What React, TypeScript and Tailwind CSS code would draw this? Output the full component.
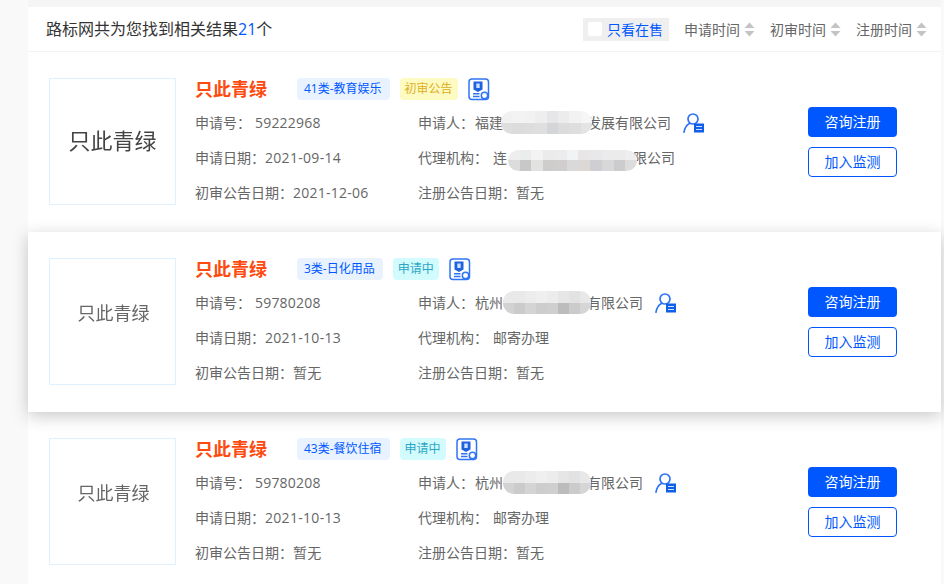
import React from "react";

const sortLabels = ["申请时间", "初审时间", "注册时间"];

const SortIcon = () => (
  <svg width="11" height="15" viewBox="0 0 11 15" className="ml-[4px]">
    <path d="M5.5 0.5 L10.5 6 H0.5 Z" fill="#c4c4c4" />
    <path d="M0.5 9 H10.5 L5.5 14.5 Z" fill="#c4c4c4" />
  </svg>
);

const MarkIcon = () => (
  <svg width="22" height="23" viewBox="0 0 22 23" fill="none" className="ml-[10px]">
    <rect x="1" y="1" width="19.5" height="20.5" rx="3" stroke="#2f74f5" strokeWidth="1.5" />
    <path d="M5.5 3.5 H14.5 V11.5 L10 14 L5.5 11.5 Z" fill="#1f62e0" />
    <rect x="8.3" y="5.5" width="3.4" height="4.5" fill="#cfe0ff" />
    <path d="M5 15.8 H11.5 M5 18.5 H11.5" stroke="#2f74f5" strokeWidth="1.4" />
    <circle cx="16.5" cy="17.5" r="3.2" fill="#fff" stroke="#2f74f5" strokeWidth="1.5" />
  </svg>
);

const PersonIcon = () => (
  <svg width="21" height="20" viewBox="0 0 21 20" fill="none" className="ml-[12px] shrink-0">
    <circle cx="10" cy="6" r="5" stroke="#2f74f5" strokeWidth="1.7" />
    <path d="M1 19.2 C1.8 14.5 3.6 12 6.4 10.5" stroke="#2f74f5" strokeWidth="1.7" strokeLinecap="round" />
    <rect x="11" y="10.5" width="10" height="9" fill="#0f5fe8" />
    <path d="M13 13.5 H19 M13 16.5 H19" stroke="#cfe0ff" strokeWidth="1" />
  </svg>
);

const Mosaic = ({ cells, className }: { cells: string[]; className: string }) => (
  <span className={`relative z-10 inline-grid overflow-hidden rounded-[11px] ${className}`}>
    {cells.map((c, i) => (
      <span key={i} className={c} />
    ))}
  </span>
);

const applicantMosaicA = [
  "bg-[#f1f1f1]", "bg-[#f3f3f3]", "bg-[#f2f2f2]", "bg-[#eeeeee]", "bg-[#e6e6e8]", "bg-[#ececec]", "bg-[#f2f2f2]", "bg-[#f6f6f6]",
  "bg-[#dedede]", "bg-[#dcdcdc]", "bg-[#dedcdc]", "bg-[#dfdfdf]", "bg-[#d4d5d8]", "bg-[#dcdcdc]", "bg-[#dedede]", "bg-[#e4e4e4]",
];
const agentMosaic = [
  "bg-[#eeeeee]", "bg-[#ebecec]", "bg-[#f3f3f3]", "bg-[#ebebeb]", "bg-[#ececec]", "bg-[#f2f3f5]", "bg-[#e8e6e6]", "bg-[#e8e8ea]", "bg-[#ebebeb]", "bg-[#ebebeb]", "bg-[#eeeeee]",
  "bg-[#dcdcdc]", "bg-[#c8c8c8]", "bg-[#e2e2e0]", "bg-[#cfcdcc]", "bg-[#cfcecc]", "bg-[#dad9d9]", "bg-[#dcd8d6]", "bg-[#cfced2]", "bg-[#d8d8d8]", "bg-[#cccbce]", "bg-[#dcdcdc]",
];
const applicantMosaicB = [
  "bg-[#e9e9e9]", "bg-[#e9e9e9]", "bg-[#ececec]", "bg-[#efefef]", "bg-[#ececec]", "bg-[#e6e6e6]", "bg-[#e2e2e2]", "bg-[#e8e8e8]",
  "bg-[#d2d2d2]", "bg-[#cbcbcb]", "bg-[#d4d4d4]", "bg-[#cdcdcd]", "bg-[#cfcfcf]", "bg-[#bcbcbc]", "bg-[#cbcbcb]", "bg-[#d6d6d6]",
];

const rows = [
  {
    id: 1,
    cat: "41类-教育娱乐",
    status: "初审公告",
    statusClass: "bg-[#fdfbc2] text-[#e0ad1c]",
    logoClass: "mb-[2px] text-[22px] text-[#444] blur-[0.4px]",
    no: "59222968",
    date: "2021-09-14",
    pub: "2021-12-06",
    applicant: (
      <>
        福建
        <span className="ml-[-2px] mr-[-5px]">
          <Mosaic cells={applicantMosaicA} className="h-[23px] w-[91px] -translate-y-[2px] grid-cols-8" />
        </span>
        发展有限公司
      </>
    ),
    agent: (
      <>
        连
        <span className="ml-[1px] mr-[-4px]">
          <Mosaic cells={agentMosaic} className="h-[21px] w-[129px] grid-cols-11" />
        </span>
        限公司
      </>
    ),
  },
  {
    id: 2,
    cat: "3类-日化用品",
    status: "申请中",
    statusClass: "bg-[#d2fbfd] text-[#2aa6c4]",
    logoClass: "mb-[17px] ml-[2px] text-[18px] text-[#666] blur-[0.4px]",
    no: "59780208",
    date: "2021-10-13",
    pub: "暂无",
    applicant: (
      <>
        杭州
        <span className="mr-[-4px]">
          <Mosaic cells={applicantMosaicB} className="h-[23px] w-[88px] -translate-y-[2px] grid-cols-8" />
        </span>
        有限公司
      </>
    ),
    agent: "邮寄办理",
  },
  {
    id: 3,
    cat: "43类-餐饮住宿",
    status: "申请中",
    statusClass: "bg-[#d2fbfd] text-[#2aa6c4]",
    logoClass: "mb-[17px] ml-[2px] text-[18px] text-[#666] blur-[0.4px]",
    no: "59780208",
    date: "2021-10-13",
    pub: "暂无",
    applicant: (
      <>
        杭州
        <span className="mr-[-4px]">
          <Mosaic cells={applicantMosaicB} className="h-[23px] w-[88px] -translate-y-[2px] grid-cols-8" />
        </span>
        有限公司
      </>
    ),
    agent: "邮寄办理",
  },
];

const App = () => {
  return (
    <div className="h-[584px] w-[944px] overflow-hidden bg-[#f9f9f9] pl-[28px] pr-[3px] font-['Open_Sans','Noto_Sans_CJK_SC',sans-serif]">
      <div className="h-[7px] bg-[#f5f5f5]" />
      <div className="flex h-[45px] items-center justify-between border-b border-[#f3f3f3] bg-white pl-[18px] pr-[14px]">
        <div className="text-[16px] text-[#333]">
          路标网共为您找到相关结果<span className="text-[#0057ff]">21</span>个
        </div>
        <div className="flex items-center">
          <label className="flex h-[23px] w-[86px] items-center bg-[#efefef] pl-[5px] text-[14px] text-[#0057ff]">
            <span className="mr-[5px] h-[14px] w-[14px] rounded-[2px] bg-white" />
            只看在售
          </label>
          <div className="ml-[15px] flex items-center text-[14px] text-[#666]">
            {sortLabels.map((s, i) => (
              <div key={s} className={`flex items-center ${i > 0 ? "ml-[15px]" : ""}`}>
                {s}
                <SortIcon />
              </div>
            ))}
          </div>
        </div>
      </div>

      {rows.map((r) => (
        <div
          key={r.id}
          className={`relative flex h-[180px] items-center bg-white pl-[21px] pr-[44px] ${
            r.id === 2 ? "z-10 shadow-[0_4px_16px_rgba(0,0,0,0.22)]" : ""
          }`}
        >
          <div className="mb-[1px] flex h-[127px] w-[127px] shrink-0 items-center justify-center border border-[#dff0ff]">
            <span className={r.logoClass}>只此青绿</span>
          </div>
          <div className="ml-[19px] mt-[4px] flex-1 text-[14px] text-[#666]">
            <div className="flex h-[22px] items-center">
              <span className="mr-[30px] text-[18px] font-bold text-[#ff4a0e]">只此青绿</span>
              <span className="rounded-[4px] bg-[#e8f3ff] pl-[7px] pr-[8px] text-[12px] leading-[22px] text-[#0057ff]">
                {r.cat}
              </span>
              <span className={`ml-[10px] rounded-[4px] px-[5px] text-[12px] leading-[22px] ${r.statusClass}`}>
                {r.status}
              </span>
              <MarkIcon />
            </div>
            <div className="mt-[5px] grid grid-cols-[223px_1fr] auto-rows-[35px] items-center">
              <div>
                申请号：<span className="ml-[4px] tracking-[0.2px]">{r.no}</span>
              </div>
              <div className="flex items-center">
                申请人：<span className="ml-[1px] flex items-center whitespace-nowrap">{r.applicant}</span>
                <PersonIcon />
              </div>
              <div>
                申请日期：<span className="tracking-[0.3px]">{r.date}</span>
              </div>
              <div className="flex items-center">
                代理机构：<span className="ml-[5px] flex items-center whitespace-nowrap">{r.agent}</span>
              </div>
              <div>
                初审公告日期：<span className="tracking-[0.25px]">{r.pub}</span>
              </div>
              <div>注册公告日期：暂无</div>
            </div>
          </div>
          <div className="flex shrink-0 flex-col gap-[10px]">
            <button className="h-[30px] w-[89px] rounded-[4px] bg-[#0057ff] pb-[2px] text-[14px] text-white">咨询注册</button>
            <button className="h-[30px] w-[89px] rounded-[4px] border border-[#0057ff] bg-white pb-[2px] text-[14px] text-[#0057ff]">
              加入监测
            </button>
          </div>
        </div>
      ))}
    </div>
  );
};

export default App;
